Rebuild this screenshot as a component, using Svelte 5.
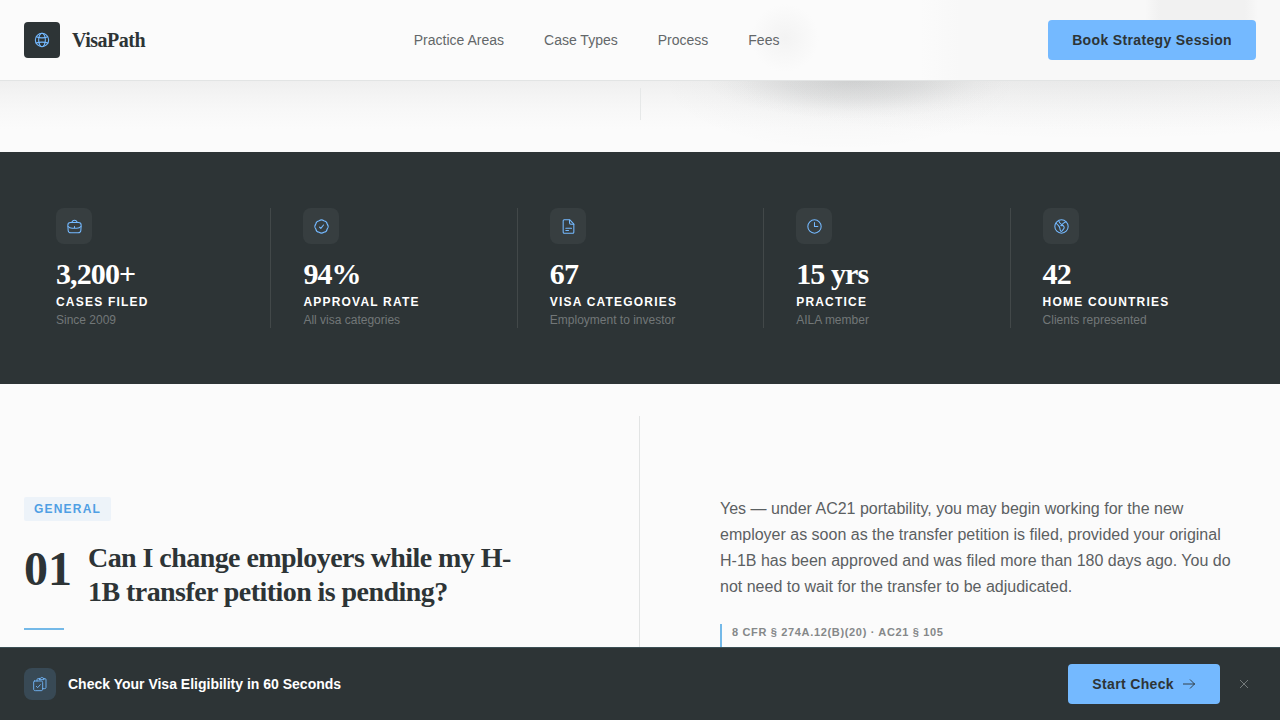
<script lang="ts">
	const links = ['Practice Areas', 'Case Types', 'Process', 'Fees'];

	const stats = [
		{ icon: 'case', value: '3,200+', label: 'Cases Filed', note: 'Since 2009' },
		{ icon: 'verified', value: '94%', label: 'Approval Rate', note: 'All visa categories' },
		{ icon: 'document', value: '67', label: 'Visa Categories', note: 'Employment to investor' },
		{ icon: 'clock', value: '15 yrs', label: 'Practice', note: 'AILA member' },
		{ icon: 'earth', value: '42', label: 'Home Countries', note: 'Clients represented' }
	];

	let showBar = $state(true);
</script>

{#snippet icon(name: string)}
	<svg class="icon" viewBox="0 0 24 24" aria-hidden="true">
		{#if name === 'globe'}
			<circle cx="12" cy="12" r="10" />
			<ellipse cx="12" cy="12" rx="5" ry="10" />
			<path d="M3.500 7c2.500 1.300 5 1.800 8.500 1.800S18 8.300 20.500 7M3 16.500c2.500-1 5.500-1.300 9-1.300s6.500.3 9 1.300" />
		{:else if name === 'case'}
			<path d="M6 6h12c2.500 0 4 1.500 4 4l-.5 8c-.2 2.500-1.500 3.500-4 3.500h-11c-2.500 0-3.800-1-4-3.500L2 10c0-2.500 1.500-4 4-4Z" />
			<path d="M8 6c.5-2.500 1.500-3.500 4-3.500S15.500 3.500 16 6M2.500 12c1.500 2 3 2.500 6 2.500h7c3 0 4.500-.5 6-2.500M12 12v1.500" />
		{:else if name === 'verified'}
			<path d="M8.440 3.400Q12 .6 15.560 3.400 20 4 20.600 8.440 23.400 12 20.600 15.560 20 20 15.560 20.600 12 23.400 8.440 20.600 4 20 3.400 15.560.6 12 3.400 8.440 4 4 8.440 3.400Z" />
			<path d="m9 12.800 2 2 4-5" />
		{:else if name === 'document'}
			<path d="M14 2H5.500C4.500 2 4 2.500 4 3.500v17c0 1 .5 1.500 1.500 1.500h13c1 0 1.500-.5 1.500-1.500V8.500L14 2Z" />
			<path d="M13.500 2.500v4c0 1.500.5 2 2 2H20M8 14.500h8.500M8 18h4" />
		{:else if name === 'clock'}
			<circle cx="12" cy="12" r="10" />
			<path d="M12 6v6h5" />
		{:else if name === 'earth'}
			<circle cx="12" cy="12" r="10" />
			<path d="M3.500 7c2 .5 3 3 5 5 1 1 1 3 1.500 5s2 3.500 3.500 1 3-3 2.500-5-3-3-5-2.500M8 3.500c.5 2.500 2 4 3.500 5M18.500 4.800c-2.500 1-5 2.700-7 6.200" />
		{:else if name === 'checklist'}
			<path d="M4 7.500h9.500c1.800 0 2.500.7 2.500 2.500v9.500c0 1.800-.7 2.500-2.500 2.500H5c-1.800 0-2.500-.7-2.500-2.500V9c0-1 .5-1.500 1.500-1.500Z" />
			<path d="M7.500 7.500V5.500C7.500 4.500 8 4 9 4h2.500M18 4h1.500c1 0 1.500.5 1.500 1.500V17c0 1.500-.8 2-2.500 2H16M11.500 5.500V3.500h1.700c.5-2 2.800-2 3.300 0H18v2h-6.500ZM6.500 15.500l2 2 4-4.500" />
		{/if}
	</svg>
{/snippet}

<header class="header">
	<a class="brand" href="#top">
		<span class="logo">{@render icon('globe')}</span>
		<span class="brand-name">VisaPath</span>
	</a>
	<nav class="nav">
		{#each links as link}
			<a href="#{link}">{link}</a>
		{/each}
	</nav>
	<button class="btn book">Book Strategy Session</button>
</header>

<section class="hero-end">
	<span class="hero-divider"></span>
</section>

<section class="stats">
	{#each stats as stat}
		<div class="stat">
			<div class="stat-icon">{@render icon(stat.icon)}</div>
			<div class="stat-value">{stat.value}</div>
			<div class="stat-label">{stat.label}</div>
			<div class="stat-note">{stat.note}</div>
		</div>
	{/each}
</section>

<main class="faq">
	<div class="question">
		<span class="tag">General</span>
		<div class="question-row">
			<span class="number">01</span>
			<h2>Can I change employers while my H-1B transfer petition is pending?</h2>
		</div>
		<div class="accent"></div>
	</div>
	<div class="divider"></div>
	<div class="answer">
		<p>
			Yes — under AC21 portability, you may begin working for the new employer as soon as the
			transfer petition is filed, provided your original H-1B has been approved and was filed more
			than 180 days ago. You do not need to wait for the transfer to be adjudicated.
		</p>
		<div class="citation">8 CFR § 274A.12(B)(20) · AC21 § 105</div>
	</div>
</main>

{#if showBar}
	<aside class="bar">
		<div class="bar-icon">{@render icon('checklist')}</div>
		<span class="bar-text">Check Your Visa Eligibility in 60 Seconds</span>
		<button class="btn start">
			Start Check
			<svg class="arrow" viewBox="0 0 14 14" aria-hidden="true">
				<path d="M1 7h12M8 2.500 12.500 7 8 11.500" />
			</svg>
		</button>
		<button class="close" aria-label="Dismiss" onclick={() => (showBar = false)}>
			<svg viewBox="0 0 16 16" aria-hidden="true"><path d="m4 4 8 8M12 4l-8 8" /></svg>
		</button>
	</aside>
{/if}

<style>
	:global(body) {
		background: #fbfbfb;
		color: #2d3436;
		font-family: 'Liberation Sans', Arial, sans-serif;
	}

	:global(#app) {
		height: 720px;
		overflow: hidden;
		display: flex;
		flex-direction: column;
	}

	.icon {
		width: 16px;
		height: 16px;
		fill: none;
		stroke: #74b9ff;
		stroke-width: 1.6;
		stroke-linecap: round;
		stroke-linejoin: round;
	}

	.btn {
		height: 40px;
		padding: 0 24px;
		border: none;
		border-radius: 4px;
		background: #74b9ff;
		color: #2d3436;
		font: bold 14px 'Liberation Sans', Arial, sans-serif;
		letter-spacing: 0.35px;
		white-space: nowrap;
		cursor: pointer;
	}

	.header {
		flex: none;
		height: 80px;
		padding: 0 24px;
		display: flex;
		align-items: center;
		justify-content: space-between;
		border-bottom: 1px solid #e2e4e4;
		background:
			radial-gradient(ellipse 34px 34px at 785px 38px, #f3f3f3, rgba(251, 251, 251, 0)),
			linear-gradient(90deg, rgba(241, 241, 241, 0) 1145px, #f1f1f1 1160px, #f1f1f1 1245px, rgba(241, 241, 241, 0) 1258px) 0 0 / 100% 20px no-repeat,
			linear-gradient(90deg, #fbfbfb 920px, #f8f8f8 960px);
	}

	.brand {
		display: flex;
		align-items: center;
		gap: 12px;
		color: inherit;
		text-decoration: none;
	}

	.logo {
		width: 36px;
		height: 36px;
		display: grid;
		place-items: center;
		border-radius: 4px;
		background: #2d3436;
	}

	.brand-name {
		font: bold 20px 'Liberation Serif', 'Times New Roman', serif;
		letter-spacing: -0.5px;
	}

	.nav {
		display: flex;
		gap: 40px;
	}

	.nav a {
		color: #636769;
		font-size: 14px;
		text-decoration: none;
	}

	.hero-end {
		flex: none;
		height: 71px;
		box-sizing: border-box;
		padding-top: 7px;
		display: flex;
		justify-content: center;
		background:
			radial-gradient(ellipse 150px 38px at 855px 0, rgba(45, 52, 54, 0.12), rgba(45, 52, 54, 0.075) 45%, rgba(45, 52, 54, 0.015) 80%, rgba(45, 52, 54, 0)),
			radial-gradient(ellipse 180px 70px at 840px 0, rgba(45, 52, 54, 0.04), rgba(45, 52, 54, 0)),
			radial-gradient(ellipse 400px 60px at 1100px 0, rgba(45, 52, 54, 0.03), rgba(45, 52, 54, 0)),
			linear-gradient(#efefef, #f4f4f4 15px, #f8f8f8 30px, #fbfbfb 48px);
	}

	.hero-divider {
		width: 1px;
		height: 32px;
		background: #e6e8e8;
	}

	.stats {
		flex: none;
		display: grid;
		grid-template-columns: repeat(5, 1fr);
		padding: 56px 24px;
		background: #2d3436;
	}

	.stat {
		height: 120px;
		padding: 0 32px;
	}

	.stat + .stat {
		border-left: 1px solid #424849;
	}

	.stat-icon {
		width: 36px;
		height: 36px;
		display: grid;
		place-items: center;
		border-radius: 8px;
		background: #373e40;
	}

	.stat-icon .icon {
		transform: translate(0.5px, 0.5px);
	}

	.stat-value {
		margin-top: 15px;
		color: #fff;
		font: bold 30px/30px 'Liberation Serif', 'Times New Roman', serif;
		letter-spacing: -0.9px;
	}

	.stat-label {
		margin-top: 4px;
		color: #fff;
		font-size: 12px;
		font-weight: bold;
		line-height: 18px;
		letter-spacing: 1.2px;
		text-transform: uppercase;
		white-space: nowrap;
	}

	.stat-note {
		color: #727778;
		font-size: 12px;
		line-height: 18px;
	}

	.faq {
		flex: 1;
		min-height: 0;
		display: grid;
		grid-template-columns: 615px 1px 1fr;
		padding: 32px 24px 0;
	}

	.question {
		padding-top: 81px;
	}

	.tag {
		display: inline-block;
		padding: 0 10px;
		border-radius: 2px;
		background: #edf3f9;
		color: #4f9fe4;
		font-size: 12px;
		font-weight: bold;
		line-height: 24px;
		letter-spacing: 1.2px;
		text-transform: uppercase;
	}

	.question-row {
		display: flex;
		gap: 16px;
		margin-top: 20px;
	}

	.number {
		padding-top: 4px;
		font: bold 48px/48px 'Liberation Serif', 'Times New Roman', serif;
	}

	h2 {
		width: 440px;
		margin: 0;
		font: bold 28px/34px 'Liberation Serif', 'Times New Roman', serif;
		letter-spacing: -0.56px;
	}

	.accent {
		width: 40px;
		height: 2px;
		margin-top: 19px;
		background: #74b9e8;
	}

	.divider {
		background: #e2e4e4;
	}

	.answer {
		padding: 80px 0 0 80px;
	}

	.answer p {
		width: 520px;
		margin: 0;
		color: #5b6062;
		font-size: 16px;
		line-height: 26px;
	}

	.citation {
		height: 26px;
		margin-top: 24px;
		padding-left: 10px;
		border-left: 2px solid #74b9e8;
		color: #858889;
		font-size: 11px;
		font-weight: bold;
		line-height: 16px;
		letter-spacing: 0.66px;
	}

	.bar {
		flex: none;
		height: 72px;
		padding: 0 24px;
		display: flex;
		align-items: center;
		border-top: 1px solid #3b5055;
		background: #2d3436;
	}

	.bar-icon {
		width: 32px;
		height: 32px;
		margin-right: 12px;
		display: grid;
		place-items: center;
		border-radius: 8px;
		background: #384955;
	}

	.bar-icon .icon {
		stroke-width: 1.3;
	}

	.bar-text {
		flex: 1;
		color: #fff;
		font-size: 14px;
		font-weight: bold;
	}

	.start {
		display: flex;
		align-items: center;
		gap: 8px;
	}

	.arrow {
		width: 14px;
		height: 14px;
		fill: none;
		stroke: #2d3436;
		stroke-width: 0.9;
	}

	.close {
		width: 24px;
		height: 24px;
		margin-left: 12px;
		padding: 4px;
		border: none;
		background: none;
		cursor: pointer;
	}

	.close svg {
		display: block;
		width: 16px;
		height: 16px;
		fill: none;
		stroke: #7d8283;
		stroke-width: 0.9;
	}
</style>
